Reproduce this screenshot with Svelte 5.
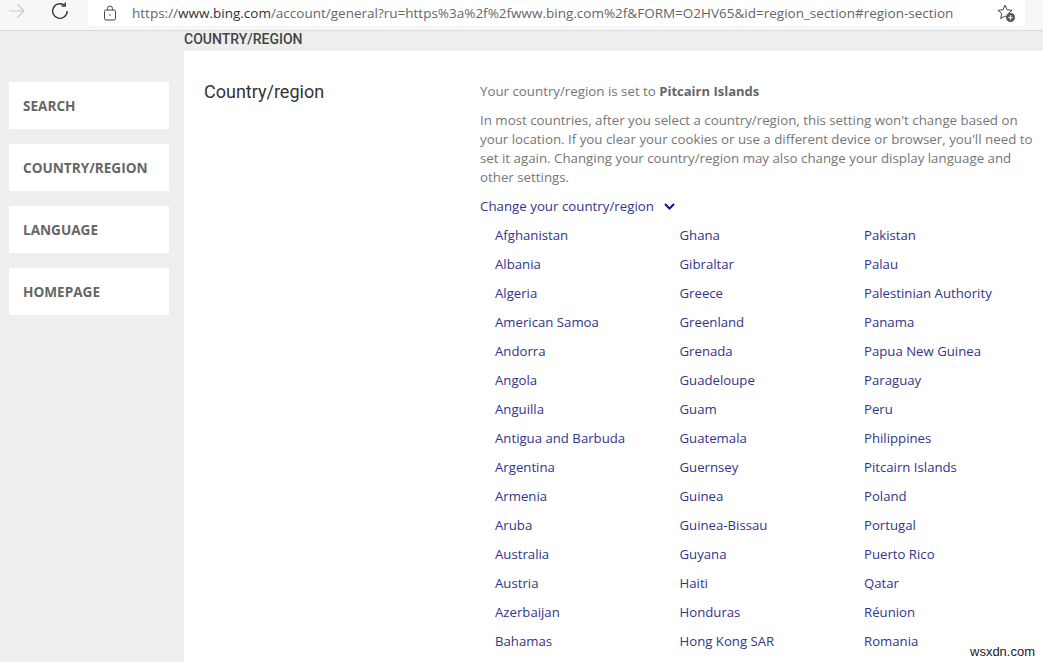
<script>
    const tabs = ['SEARCH', 'COUNTRY/REGION', 'LANGUAGE', 'HOMEPAGE'];

    const columns = [
        ['Afghanistan', 'Albania', 'Algeria', 'American Samoa', 'Andorra', 'Angola', 'Anguilla', 'Antigua and Barbuda', 'Argentina', 'Armenia', 'Aruba', 'Australia', 'Austria', 'Azerbaijan', 'Bahamas'],
        ['Ghana', 'Gibraltar', 'Greece', 'Greenland', 'Grenada', 'Guadeloupe', 'Guam', 'Guatemala', 'Guernsey', 'Guinea', 'Guinea-Bissau', 'Guyana', 'Haiti', 'Honduras', 'Hong Kong SAR'],
        ['Pakistan', 'Palau', 'Palestinian Authority', 'Panama', 'Papua New Guinea', 'Paraguay', 'Peru', 'Philippines', 'Pitcairn Islands', 'Poland', 'Portugal', 'Puerto Rico', 'Qatar', 'Réunion', 'Romania']
    ];
</script>

<div class="page">
    <header class="toolbar">
        <svg class="back" width="20" height="16" viewBox="0 0 20 16" fill="none" stroke="#c8c8c8" stroke-width="1.2">
            <path d="M2 8h15M10.500 1.500 17 8l-6.500 6.500" />
        </svg>
        <svg class="reload" width="18" height="18" viewBox="0 0 18 18" fill="none" stroke="#333" stroke-width="1.4">
            <path d="M13.800 3.600A7.300 7.300 0 1 0 16.200 9" />
            <path d="M14.200 0.500v3.600h-3.600" />
        </svg>
        <div class="urlbar">
            <svg class="lock" width="14" height="16" viewBox="0 0 14 16" fill="none" stroke="#444" stroke-width="1">
                <rect x="1.500" y="5" width="11" height="10" rx="1.500" />
                <path d="M4.500 5V3.500a2.500 2.500 0 0 1 5 0V5" />
                <circle cx="7" cy="10" r="0.800" fill="#444" stroke="none" />
            </svg>
            <span class="url"><span class="dim">https://</span>www.bing.com<span class="dim">/account/general?ru=https%3a%2f%2fwww.bing.com%2f&amp;FORM=O2HV65&amp;id=region_section#region-section</span></span>
            <svg class="star" width="20" height="20" viewBox="0 0 20 20">
                <path d="M9 2.200l2 4.600 5 .5-3.700 3.300 1 4.900L9 13l-4.300 2.500 1-4.900L2 7.300l5-.5z" fill="none" stroke="#444" stroke-width="1" />
                <circle cx="14.500" cy="14.500" r="4.500" fill="#555" />
                <path d="M14.500 12.300v4.400M12.300 14.500h4.400" stroke="#fff" stroke-width="1.200" />
            </svg>
        </div>
    </header>

    <div class="body">
        <nav class="side">
            {#each tabs as tab}
                <div class="tab">{tab}</div>
            {/each}
        </nav>
        <div class="content">
            <div class="crumb">COUNTRY/REGION</div>
            <main class="section">
                <h2>Country/region</h2>
                <div class="detail">
                    <p class="current">Your country/region is set to <b>Pitcairn Islands</b></p>
                    <p class="note">In most countries, after you select a country/region, this setting won't change based on your location. If you clear your cookies or use a different device or browser, you'll need to set it again. Changing your country/region may also change your display language and other settings.</p>
                    <div class="change">
                        Change your country/region
                        <svg width="11" height="7" viewBox="0 0 11 7" fill="none" stroke="#14148c" stroke-width="2">
                            <path d="M1 1l4.500 4.500L10 1" />
                        </svg>
                    </div>
                    <div class="list">
                        {#each columns as col}
                            <ul>
                                {#each col as name}
                                    <li>{name}</li>
                                {/each}
                            </ul>
                        {/each}
                    </div>
                </div>
            </main>
        </div>
    </div>
    <span class="mark">wsxdn.com</span>
</div>

<style>
    :global(body) {
        margin: 0;
    }

    .page {
        position: relative;
        width: 1043px;
        height: 662px;
        overflow: hidden;
        background: #fff;
        font-family: "Open Sans", "Noto Sans", sans-serif;
    }

    .toolbar {
        display: flex;
        align-items: flex-start;
        height: 31px;
        box-sizing: border-box;
        background: #f7f7f7;
        border-bottom: 1px solid #d9d9d9;
    }

    .back {
        margin: 3px 0 0 7px;
    }

    .reload {
        margin: 2px 0 0 24px;
    }

    .urlbar {
        display: flex;
        align-items: center;
        width: 937px;
        height: 26px;
        margin-left: 19px;
        background: #fff;
        border-radius: 0 0 4px 4px;
    }

    .lock {
        margin-left: 15px;
    }

    .url {
        margin-left: 15px;
        font-size: 13.500px;
        color: #333;
        white-space: nowrap;
    }

    .dim {
        color: #666;
    }

    .star {
        margin-left: auto;
        margin-right: 9px;
    }

    .body {
        display: flex;
        height: 631px;
    }

    .side {
        flex: none;
        display: flex;
        flex-direction: column;
        gap: 15px;
        width: 184px;
        box-sizing: border-box;
        padding: 51px 15px 0 9px;
        background: #eee;
    }

    .tab {
        height: 47px;
        padding-left: 14px;
        background: #fff;
        font-size: 13.600px;
        font-weight: 700;
        line-height: 47px;
        color: #666;
    }

    .content {
        flex: 1;
    }

    .crumb {
        height: 20px;
        background: #eee;
        font-family: Roboto, sans-serif;
        font-size: 14px;
        font-weight: 500;
        line-height: 17px;
        color: #444;
    }

    .section {
        display: flex;
        padding-left: 20px;
    }

    h2 {
        flex: none;
        width: 276px;
        margin: 29px 0 0;
        font-family: Roboto, sans-serif;
        font-size: 18px;
        font-weight: 400;
        line-height: 24px;
        color: #333;
    }

    .detail {
        flex: 1;
        padding-top: 30px;
        font-size: 13.300px;
        color: #767676;
    }

    p {
        margin: 0;
    }

    .current {
        line-height: 20px;
    }

    .current b {
        font-size: 13px;
        color: #666;
    }

    .note {
        margin-top: 10px;
        width: 556px;
        line-height: 19px;
    }

    .change {
        display: flex;
        align-items: center;
        gap: 10px;
        margin-top: 9px;
        line-height: 20px;
        color: #34348a;
    }

    .list {
        display: flex;
        padding-left: 15px;
        margin-top: 5px;
        font-size: 13.200px;
    }

    ul {
        width: 184.500px;
        margin: 0;
        padding: 0;
        list-style: none;
    }

    li {
        height: 29px;
        line-height: 29px;
        color: #34348a;
        white-space: nowrap;
    }

    .mark {
        position: absolute;
        left: 970px;
        top: 644px;
        font-family: "Liberation Sans", sans-serif;
        font-size: 13px;
        color: #222;
        background: #fff;
    }
</style>
